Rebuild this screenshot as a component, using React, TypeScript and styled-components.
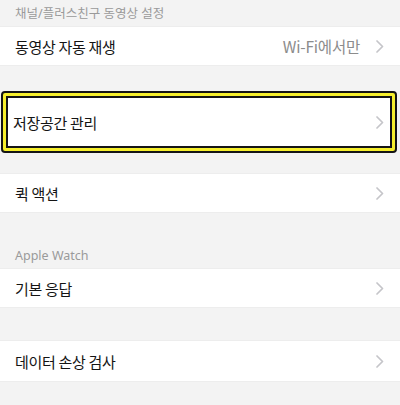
import styled, { createGlobalStyle } from 'styled-components';

const GlobalStyle = createGlobalStyle`
  html, body {
    margin: 0;
    padding: 0;
    background: #f3f3f3;
  }
  body {
    font-family: "Noto Sans CJK KR", "Noto Sans", "Liberation Sans", sans-serif;
    -webkit-font-smoothing: antialiased;
  }
`;

const Page = styled.div`
  width: 400px;
  height: 405px;
  display: flex;
  flex-direction: column;
  background: #f3f3f3;
  overflow: hidden;
`;

const SectionHeader = styled.div<{ $height: number }>`
  height: ${(p) => p.$height}px;
  flex-shrink: 0;
  display: flex;
  align-items: flex-end;
  padding: 0 15px 4px;
  box-sizing: border-box;
  font-family: "Noto Sans", "Noto Sans CJK KR", sans-serif;
  font-size: 12.5px;
  line-height: 16px;
  color: #9a9a9a;
`;

const Spacer = styled.div<{ $height: number }>`
  height: ${(p) => p.$height}px;
  flex-shrink: 0;
`;

const Row = styled.div<{ $height?: number; $inset?: boolean }>`
  height: ${(p) => p.$height ?? 40}px;
  flex-shrink: 0;
  display: flex;
  align-items: center;
  gap: 12px;
  padding: ${(p) => (p.$inset ? '0 6px 0 5px' : '0 16px 0 15px')};
  box-sizing: border-box;
  background: #ffffff;
  border-top: ${(p) => (p.$inset ? 'none' : '1px solid #ededed')};
  border-bottom: ${(p) => (p.$inset ? 'none' : '1px solid #ededed')};
`;

const Label = styled.span`
  flex: 1;
  font-size: 15px;
  color: #141414;
  letter-spacing: -0.3px;
`;

const Value = styled.span`
  font-size: 15.5px;
  color: #8c8c8c;
  letter-spacing: -0.2px;
  margin-right: 4px;
`;

const Highlight = styled.div`
  height: 62px;
  flex-shrink: 0;
  margin: 0 3px 0 1px;
  box-sizing: border-box;
  border: 2px solid #151515;
  border-radius: 4px;
  padding: 3px;
  background: #f6ef2c;
  display: flex;
`;

const HighlightInner = styled.div`
  flex: 1;
  border: 2px solid #151515;
  display: flex;
  flex-direction: column;
  & > div {
    height: 100%;
  }
`;

function Chevron() {
  return (
    <svg width="8" height="13" viewBox="0 0 8 13" fill="none">
      <polyline
        points="1,1 6.5,6.5 1,12"
        stroke="#c5c5c9"
        strokeWidth="1.7"
        strokeLinecap="round"
        strokeLinejoin="round"
      />
    </svg>
  );
}

export default function App() {
  return (
    <Page>
      <GlobalStyle />
      <SectionHeader $height={26}>채널/플러스친구 동영상 설정</SectionHeader>
      <Row>
        <Label>동영상 자동 재생</Label>
        <Value>Wi-Fi에서만</Value>
        <Chevron />
      </Row>
      <Spacer $height={25} />
      <Highlight>
        <HighlightInner>
          <Row $inset>
            <Label>저장공간 관리</Label>
            <Chevron />
          </Row>
        </HighlightInner>
      </Highlight>
      <Spacer $height={20} />
      <Row>
        <Label>퀵 액션</Label>
        <Chevron />
      </Row>
      <SectionHeader $height={55}>Apple Watch</SectionHeader>
      <Row>
        <Label>기본 응답</Label>
        <Chevron />
      </Row>
      <Spacer $height={32} />
      <Row $height={42}>
        <Label>데이터 손상 검사</Label>
        <Chevron />
      </Row>
    </Page>
  );
}
